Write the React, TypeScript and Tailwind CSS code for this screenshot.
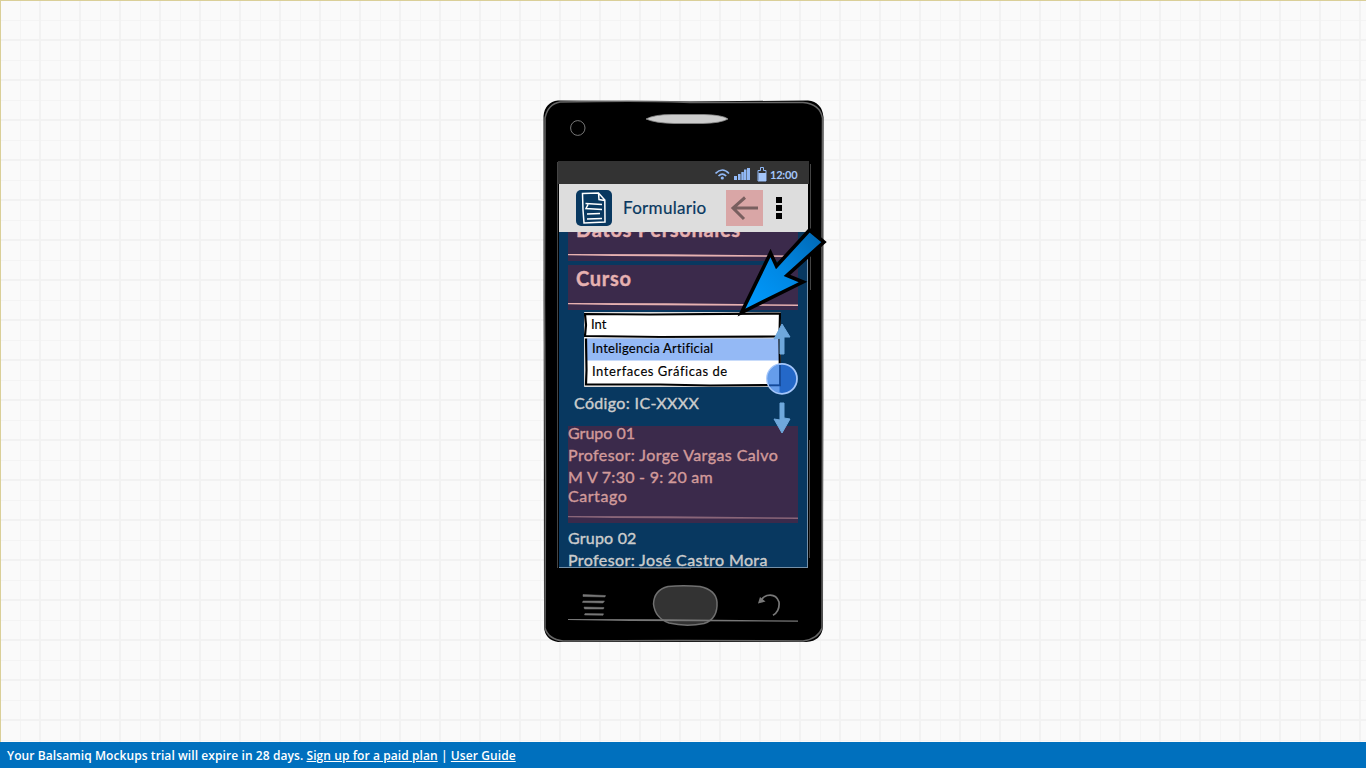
import React from "react";

const Rule = ({ color }: { color: string }) => (
  <svg className="block h-[4px] w-[230px]" viewBox="0 0 230 4">
    <path d="M0 0 L100 .2 L230 1.6 L230 3 L130 2.6 L45 2 L0 1.200Z" fill={color} />
  </svg>
);

const PhoneBody = () => (
  <svg className="absolute inset-0 h-[543px] w-[282px]" viewBox="543 100 282 543">
    <path d="M558 100.500 L690 101.500 L808 100.500 Q822 102 823.500 117 L823 626 Q822 641 806 642 L558 642 Q545 640 544 627 L543.500 116 Q545 102 558 100.500Z" fill="#000" />
    <path d="M560 102 Q650 100.500 690 102.500 L803 102.500 Q820 104 822.500 118 L822 250 L822.500 400 L822 628 Q818 639 803 641 L680 640.500 L563 641 Q548 639 545 628 L545.500 480 L544.500 300 L545 118 Q548 104 560 102Z" fill="none" stroke="#666" strokeWidth="1.500" />
    <ellipse cx="577.800" cy="128" rx="7.200" ry="7.400" fill="none" stroke="#777" />
    <path d="M646 119 Q654 114.500 672 114.500 L704 114.500 Q723 115 728 119 Q721 123 703 123.500 L674 123.500 Q655 123 646 119Z" fill="#ccc" stroke="#888" strokeWidth=".8" />
    <path d="M557.500 162 V568 M810.500 164 V290 M809.500 440 V558 M640 568.500 H691" stroke="#444" fill="none" />
    <path d="M583 594.500 L605.500 595.500 L605 597 L583 596.500Z M583 601 L604.500 601 L603 603 L582.500 602.500Z M584 607 L604 607.500 L603.500 609 L584.500 609Z M585 613.500 L603.500 613.800 L603 615.300 L584.500 615Z" fill="#777" stroke="#777" strokeWidth=".5" />
    <path d="M668 586.500 Q683 585 700 586.500 Q716 590 717 602 Q718 619 704 623.500 Q686 627 669 623 Q655 618 653.500 604 Q654 590 668 586.500Z" fill="#333" stroke="#707070" strokeWidth="1.500" />
    <path d="M773 615.300 Q780 611 779 602 Q776 593.500 767 595.500 Q763 596.800 761.500 600" fill="none" stroke="#777" strokeWidth="1.700" />
    <path d="M760 597 L758 603.500 L765.500 601.500Z" fill="#777" />
    <path d="M568 619 L670 619.300 L798 620.500 L798 621.700 L630 621 L568 620Z" fill="#777" />
  </svg>
);

const StatusBar = () => (
  <div className="flex h-[23px] items-center bg-[#333] pl-[157px] text-[#a4c6fa]">
    <svg className="h-[23px] w-[55px] shrink-0" viewBox="715 161 55 23">
      <path d="M715.500 173.500 Q722.300 166.500 729 173.500 M718.500 176 Q722.300 172.300 726.200 176" fill="none" stroke="#91b8f5" strokeWidth="1.700" />
      <circle cx="722.300" cy="178" r="1.600" fill="#91b8f5" />
      <path d="M734 176h3v4h-3zM738 174h2.600v6H738zM741.300 172h2.500v8h-2.500zM744 169.500h2.500V180H744zM747 168h3v12h-3z" fill="#91b8f5" />
      <path d="M758 170.500h2.500v-3h3v3h2.500V181h-8z" fill="none" stroke="#91b8f5" />
      <path d="M758.500 173h7.500v8h-7.500z" fill="#a4c6fa" />
    </svg>
    <span className="mt-[5px] text-[11px] font-bold tracking-[-0.2px]">12:00</span>
  </div>
);

const Header = () => (
  <div className="flex h-[48px] w-[249px] items-center bg-[#ddd] pl-[17px] text-[#083860]">
    <div className="h-[36px] w-[36px] shrink-0 rounded-[5px] bg-[#083860]">
      <svg viewBox="576 190 36 36" className="h-9 w-9">
        <path d="M582.500 193.500 L598.500 193 L604.800 200 L605 222 L584 223 L583 210Z M598.500 193 L599 199.500 L604.800 200.500 M585.500 203.500 L602 204.500 M588 204.500 L586 208.500 L602 209.500 M587 214 L600 213.500 M587 219 L602 218.500" fill="none" stroke="#fff" strokeWidth="1.500" />
      </svg>
    </div>
    <span className="ml-[11px] w-[103px] text-[17px] tracking-[0.3px] [-webkit-text-stroke:0.2px_currentColor]">Formulario</span>
    <div className="h-[36px] w-[37px] shrink-0 bg-[#d9a6a6]">
      <svg viewBox="726 190 37 36" className="h-9 w-[37px]">
        <path d="M758 208 H734 M745 197.500 L733 208 L744 219" fill="none" stroke="#795f5f" strokeWidth="3" />
      </svg>
    </div>
    <div className="ml-[13px] flex flex-col gap-[2px]">
      <i className="block h-[6px] w-[6px] bg-black" />
      <i className="block h-[6px] w-[6px] bg-black" />
      <i className="block h-[6px] w-[6px] bg-black" />
    </div>
  </div>
);

const Autocomplete = () => (
  <div className="relative mt-[2px] ml-[25px] h-[75px] w-[197px] text-[13px] text-black [-webkit-text-stroke:0.15px_currentColor]">
    <svg className="absolute inset-0 h-[75px] w-[197px]" viewBox="584 312 197 75">
      <path d="M584.500 312.500H780.500V386.500H584.500Z" fill="#fff" stroke="#ddd" />
      <path d="M587 338H779V360.500H587Z" fill="#94b9f5" />
      <path d="M585 314 L650 314.500 L780 313.500 L779.500 336.500 L660 337 L585 336 L586 325Z" fill="none" stroke="#000" strokeWidth="2.200" />
      <path d="M586 338.300 H780" stroke="#ddd" strokeWidth=".6" />
      <path d="M586 338.500 L586.500 370 L586 384.500 L660 384.500 L710 385.500 L780 385 L779.500 338.500" fill="none" stroke="#000" strokeWidth="2.200" />
    </svg>
    <div className="relative">
      <div className="h-[25px] pl-[7px] leading-[25px]">Int</div>
      <div className="h-[23px] pl-[8px] leading-[22px] tracking-[0.25px]">Inteligencia Artificial</div>
      <div className="h-[23px] pl-[8px] leading-[22px] tracking-[0.55px]">Interfaces Gráficas de</div>
    </div>
  </div>
);

const Overlay = () => (
  <svg className="absolute inset-0 h-[543px] w-[290px]" viewBox="543 100 290 543">
    <defs>
      <linearGradient id="arrowFill" x1="745" y1="310" x2="820" y2="235" gradientUnits="userSpaceOnUse">
        <stop offset="0" stopColor="#009cff" />
        <stop offset=".5" stopColor="#0088e4" />
        <stop offset="1" stopColor="#0069b5" />
      </linearGradient>
    </defs>
    <path d="M741.500 312.500 L770.500 253 L776.500 266 L809.500 230 L824 242 L787 275.500 L803 282Z" fill="url(#arrowFill)" stroke="#000" strokeWidth="3.600" />
    <path d="M780 354 V338 L774 339 L782 324 L790 337 L784 337 V354Z M780 403 H784 V418 L790 419 L782 433 L774 419 L780 420Z" fill="#6fa8dc" stroke="#6fa8dc" strokeLinejoin="round" />
    <circle cx="782" cy="378.800" r="15" fill="#2468c8" stroke="#a4c6fa" strokeWidth="1.800" />
    <path d="M779.500 364.500 A14 14 0 0 0 768.800 384.500 H779.500Z M770 386 A14 14 0 0 0 779.500 393 V386Z" fill="#659deb" />
    <path d="M780 365 V386 M769 385.300 H781" stroke="#164a97" strokeWidth="1.800" />
  </svg>
);

export default function App() {
  return (
    <div className="flex h-[768px] w-[1366px] flex-col overflow-hidden bg-[#fafafa] font-[Lato,'Open_Sans',sans-serif]">
      <main className="relative h-[742px] shrink-0 pt-[100px] pl-[543px]">
        <svg className="absolute inset-0 h-[742px] w-[1366px]">
          <defs>
            <pattern id="grid" width="40" height="40" patternUnits="userSpaceOnUse">
              <path d="M20 0h1v40h-1zM0 20h40v1H0z" fill="#f4f4f4" />
              <path d="M39 0h1v40h-1zM0 0h1v40H0zM0 39h40v1H0zM0 0h40v1H0z" fill="#f2f2f2" />
            </pattern>
          </defs>
          <rect width="1366" height="742" fill="url(#grid)" />
          <path d="M0 .5H1366M.5 0V742" stroke="#dacf98" />
        </svg>
        <div className="relative h-[543px] w-[282px] pt-[61px] pl-[15px]">
          <PhoneBody />
          <div className="relative w-[251px]">
            <StatusBar />
            <div className="ml-px w-[249px]">
              <Header />
              <div className="h-[336px] overflow-hidden border-r border-b border-[#7590a8] bg-[#083860] text-[16px] text-[#ccc] [-webkit-text-stroke:0.4px_currentColor]">
                <section className="ml-[9px] flex h-[29px] w-[230px] flex-col bg-[#3b2a4b] font-bold text-[#e6b1b1]">
                  <div className="h-[22px] overflow-hidden pl-[8px] text-[20px] leading-[22px]"><div className="-mt-[14px] tracking-[0.7px]">Datos Personales</div></div>
                  <Rule color="#e6b1b1" />
                </section>
                <section className="mt-[4px] ml-[9px] h-[45px] w-[230px] bg-[#3b2a4b] text-[#e6b1b1]">
                  <div className="h-[38px] pl-[8px] text-[20px] leading-[26px] font-bold tracking-[0.75px]">Curso</div>
                  <Rule color="#e6b1b1" />
                </section>
                <Autocomplete />
                <div className="ml-[15px] h-[39px] leading-[32px] tracking-[0.35px]">Código: IC-XXXX</div>
                <section className="ml-[9px] h-[97px] w-[230px] bg-[#3b2a4b] text-[#d19a9a]">
                  <div className="h-[18px] leading-[14px] tracking-[0px]">Grupo 01</div>
                  <div className="h-[22px] leading-[22px] tracking-[0.42px]">Profesor: Jorge Vargas Calvo</div>
                  <div className="h-[22px] leading-[22px] tracking-[0.27px]">M V 7:30 - 9: 20 am</div>
                  <div className="h-[28px] leading-[16px] tracking-[0.55px]">Cartago</div>
                  <Rule color="#896579" />
                </section>
                <section className="ml-[9px] pt-[4px] whitespace-nowrap">
                  <div className="h-[22px] leading-[22px] tracking-[0.2px]">Grupo 02</div>
                  <div className="h-[22px] leading-[22px] tracking-[0.4px]">Profesor: José Castro Mora</div>
                </section>
              </div>
            </div>
          </div>
          <Overlay />
        </div>
      </main>
      <footer className="h-[26px] bg-[#0070be] pl-[7px] font-['Open_Sans',sans-serif] text-[12px] leading-[27px] font-semibold tracking-[0.082px] whitespace-pre text-white">
        <span>Your Balsamiq Mockups trial will expire in 28 days. </span>
        <a className="underline">Sign up for a paid plan</a>
        <span> | </span>
        <a className="underline">User Guide</a>
      </footer>
    </div>
  );
}
